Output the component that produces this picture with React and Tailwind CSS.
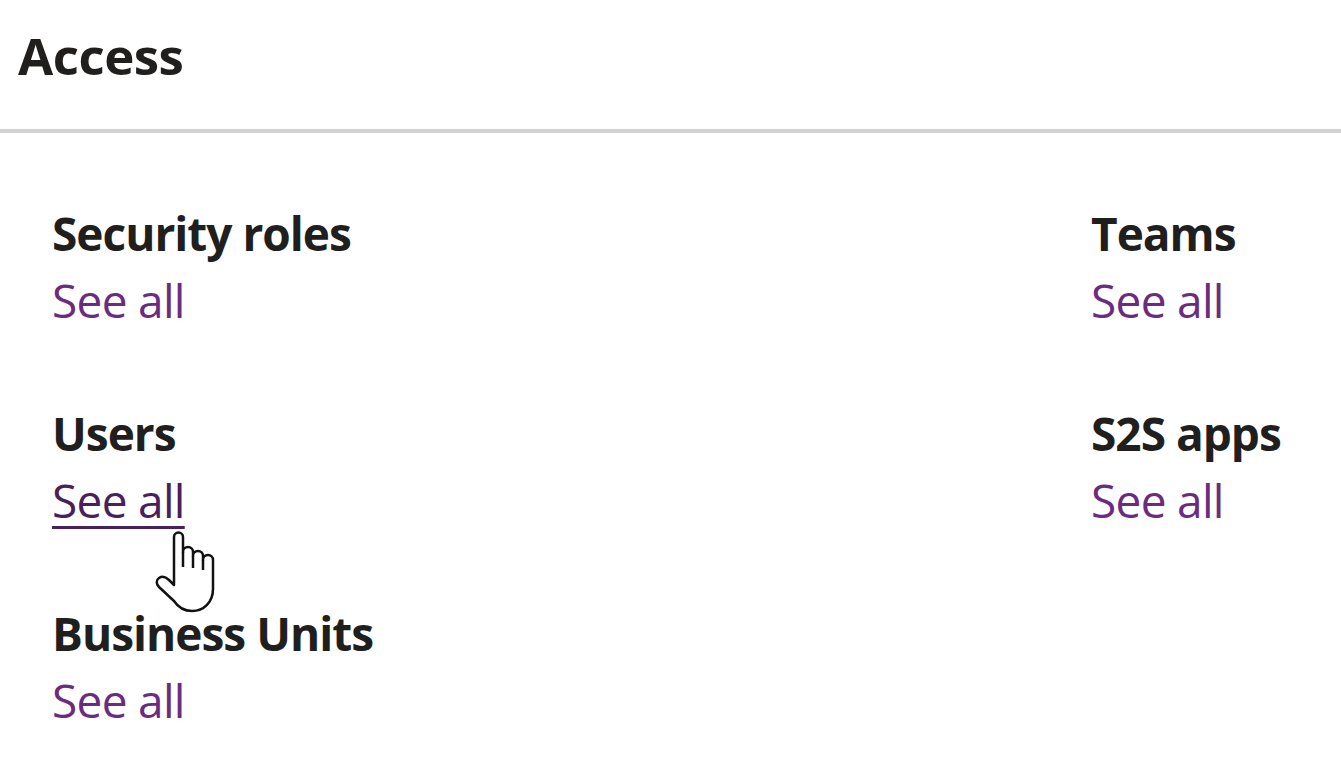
export default function App() {
  const sections = [
    [{ title: "Security roles" }, { title: "Teams" }],
    [{ title: "Users", hover: true }, { title: "S2S apps" }],
    [{ title: "Business Units" }, null],
  ];

  return (
    <div className="relative w-[1341px] h-[768px] bg-white overflow-hidden text-[#201f1e]" style={{ fontFamily: '"Open Sans", "Noto Sans", sans-serif' }}>
      {/* page header */}
      <div className="h-[133px] pl-[18px] pt-[23px] border-b-4 border-[#d2d2d2]">
        <h1 className="text-[51px] leading-[64px] font-bold tracking-[-0.5px]">Access</h1>
      </div>

      <div className="pl-[52px] pt-[67px] flex flex-col gap-[66px]">
        {sections.map((row, i) => (
          <div key={i} className="grid grid-cols-[1039px_1fr]">
            {row.map((s, j) =>
              s ? (
                <div key={j} className="flex flex-col">
                  <h2 className="text-[46px] leading-[67px] font-bold tracking-[-1px]">{s.title}</h2>
                  <a
                    href="#"
                    className={`text-[46px] leading-[67px] tracking-[-0.7px] self-start ${
                      s.hover ? "text-[#4b1f5c] underline decoration-[3px] underline-offset-[8px]" : "text-[#6b2c80]"
                    }`}
                  >
                    See all
                  </a>
                </div>
              ) : (
                <div key={j} />
              )
            )}
          </div>
        ))}
      </div>

      {/* mouse pointer over the hovered link */}
      <svg className="absolute left-[150px] top-[525px]" width="70" height="90" viewBox="0 0 70 90">
        <path
          d="M24 12a4.5 4.5 0 0 1 9 0V27a5 5 0 0 1 10 0V31a5 5 0 0 1 10 0V35a5 5 0 0 1 10 0V64C63 77 54 86 42 86C34 86 28 82 24 76L9 62C6 59 6 55 9 53C12 51 16 52 19 55L24 60Z"
          fill="#fff"
          stroke="#111"
          strokeWidth="2.5"
          strokeLinejoin="round"
        />
        <path d="M33 27V42M43 31V43M53 35V45" stroke="#111" strokeWidth="2.5" />
      </svg>
    </div>
  );
}
